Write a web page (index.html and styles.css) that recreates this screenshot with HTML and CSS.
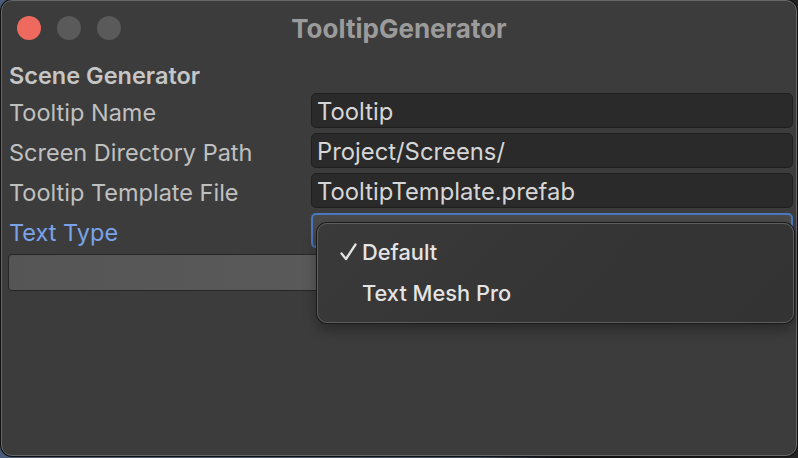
FILE: index.html
```html
<!DOCTYPE html>
<html>
<head>
<meta charset="utf-8">
<link rel="stylesheet" href="styles.css">
</head>
<body>
<div class="window">
  <div class="titlebar">
    <div class="lights">
      <span class="light red"></span>
      <span class="light"></span>
      <span class="light"></span>
    </div>
    <div class="title">TooltipGenerator</div>
  </div>
  <div class="content">
    <div class="section">Scene Generator</div>
    <div class="row">
      <div class="label">Tooltip Name</div>
      <div class="field">Tooltip</div>
    </div>
    <div class="row">
      <div class="label">Screen Directory Path</div>
      <div class="field">Project/Screens/</div>
    </div>
    <div class="row">
      <div class="label">Tooltip Template File</div>
      <div class="field">TooltipTemplate.prefab</div>
    </div>
    <div class="row">
      <div class="label active">Text Type</div>
      <div class="field select"></div>
    </div>
    <div class="button"></div>
  </div>
  <div class="popup">
    <div class="item"><span class="check"><svg width="17" height="18" viewBox="0 0 17 18"><path d="M1.5 10.5 L6 16 L15.5 1.5" fill="none" stroke="#e4e4e4" stroke-width="2.3" stroke-linecap="round" stroke-linejoin="round"/></svg></span>Default</div>
    <div class="item"><span class="check"></span>Text Mesh Pro</div>
  </div>
</div>
</body>
</html>
```

FILE: styles.css
```css
html, body {
  margin: 0;
  padding: 0;
}
body {
  width: 798px;
  height: 458px;
  background: linear-gradient(90deg, #4b5b7a 0%, #3e4d6a 60%, #111 70%, #222 100%);
  overflow: hidden;
  font-family: Inter, "Noto Sans", sans-serif;
}
.window {
  position: relative;
  box-sizing: border-box;
  margin-left: 1px;
  width: 796px;
  height: 456px;
  background: #3c3c3c;
  border: 1px solid #686868;
  border-radius: 11px;
  box-shadow: 0 0 0 1px #111;
}
.titlebar {
  position: relative;
  height: 56px;
  display: flex;
  align-items: center;
  justify-content: center;
}
.lights {
  position: absolute;
  left: 15px;
  top: 15px;
  display: flex;
  gap: 16px;
}
.light {
  width: 24px;
  height: 24px;
  border-radius: 50%;
  background: #5a5a5a;
}
.light.red {
  background: #ee6a5f;
}
.title {
  font-weight: 700;
  font-size: 26px;
  color: #9b9b9b;
  margin-top: -2px;
  margin-left: 0px;
}
.content {
  padding: 4px 3px 0 7px;
  display: flex;
  flex-direction: column;
}
.section {
  font-weight: 600;
  font-size: 23.5px;
  color: #c6c6c6;
  height: 32px;
  line-height: 30px;
}
.row {
  display: flex;
  align-items: center;
  height: 35px;
  margin-bottom: 5px;
}
.label {
  width: 301px;
  font-size: 23.5px;
  color: #c0c0c0;
  margin-top: 3px;
  margin-right: 1px;
}
.label.active {
  color: #7aa3ea;
}
.field {
  flex: 1;
  box-sizing: border-box;
  height: 35px;
  background: #2a2a2a;
  border: 1px solid #1f1f1f;
  border-radius: 5px;
  font-size: 23.8px;
  color: #d6d6d6;
  padding-left: 5px;
  line-height: 36px;
}
.field.select {
  border: 2px solid #4a78c0;
  background: #4a4a4a;
}
.button {
  box-sizing: border-box;
  height: 37px;
  margin-top: 1px;
  margin-left: -1px;
  background: linear-gradient(90deg, #555 0%, #5b5b5b 50%, #555 100%);
  border: 1px solid #262626;
  border-radius: 4px;
}
.popup {
  position: absolute;
  left: 315px;
  top: 222px;
  width: 477px;
  height: 100px;
  box-sizing: border-box;
  background: linear-gradient(135deg, #3a3a3a 0%, #353535 50%, #333 100%);
  border: 1px solid #5e5e5e;
  border-radius: 10px;
  box-shadow: 0 0 0 1px #1a1a1a, 0 6px 14px rgba(0,0,0,0.35);
  padding-top: 7px;
}
.item {
  display: flex;
  align-items: center;
  height: 41px;
  font-size: 21.8px;
  font-weight: 500;
  color: #e4e4e4;
  padding-left: 22px;
}
.check {
  width: 22px;
  height: 18px;
  display: flex;
  align-items: center;
  margin-top: 1px;
}
```
